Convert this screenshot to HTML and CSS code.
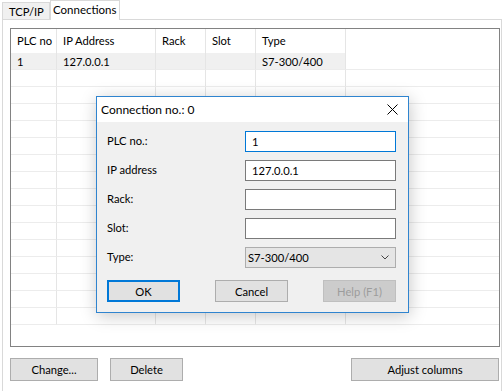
FILE: index.html
```html
<!DOCTYPE html>
<html>
<head>
<meta charset="utf-8">
<link rel="stylesheet" href="styles.css">
</head>
<body>
<div class="window">
  <div class="tabs">
    <div class="tab">TCP/IP</div>
    <div class="tab active">Connections</div>
  </div>
  <div class="panel">
    <div class="list">
      <div class="grid">
        <div class="hc">PLC no</div><div class="hc">IP Address</div><div class="hc">Rack</div><div class="hc">Slot</div><div class="hc">Type</div><div class="hc last"></div>
        <div class="c sel">1</div><div class="c sel">127.0.0.1</div><div class="c sel"></div><div class="c sel"></div><div class="c sel">S7-300/400</div><div class="c last"></div>
      </div>
      <div class="grid empty" id="empty"></div>
    </div>
    <div class="actions">
      <button class="btn change">Change...</button>
      <button class="btn delete">Delete</button>
      <button class="btn adjust">Adjust columns</button>
    </div>
  </div>

  <div class="dialog">
    <div class="titlebar">
      <span class="title">Connection no.: 0</span>
      <svg class="close" width="11" height="11" viewBox="0 0 11 11"><path d="M0.5 0.5 L10.5 10.5 M10.5 0.5 L0.5 10.5" stroke="#000" stroke-width="1" fill="none"/></svg>
    </div>
    <div class="dbody">
      <div class="form">
        <label>PLC no.:</label><div class="field focus">1</div>
        <label>IP address</label><div class="field">127.0.0.1</div>
        <label>Rack:</label><div class="field"></div>
        <label>Slot:</label><div class="field"></div>
        <label>Type:</label>
        <div class="select"><span>S7-300/400</span>
          <svg width="8" height="5" viewBox="0 0 8 5"><path d="M0.5 0.5 L4 4 L7.5 0.5" stroke="#444" stroke-width="1" fill="none"/></svg>
        </div>
      </div>
      <div class="dbuttons">
        <button class="btn dbtn ok">OK</button>
        <button class="btn dbtn">Cancel</button>
        <button class="btn dbtn disabled">Help (F1)</button>
      </div>
    </div>
  </div>
</div>
<script>
  var e = document.getElementById('empty');
  var h = '';
  for (var r = 0; r < 15; r++) {
    for (var c = 0; c < 5; c++) h += '<div class="c"></div>';
    h += '<div class="c last"></div>';
  }
  e.innerHTML = h;
</script>
</body>
</html>
```
FILE: styles.css
```css
* { box-sizing: border-box; }
html, body { margin: 0; padding: 0; background: #fff; }
body {
  font-family: "Segoe UI", Lato, "Noto Sans", sans-serif;
  font-size: 11.2px;
  color: #000;
  width: 503px;
  height: 391px;
  overflow: hidden;
}
.window { position: relative; width: 503px; height: 391px; }

.tabs {
  display: flex;
  align-items: flex-end;
  height: 19px;
  padding-left: 2px;
}
.tab {
  height: 17px;
  width: 48px;
  border: 1px solid #d9d9d9;
  border-bottom: none;
  background: #f0f0f0;
  padding-left: 6px;
  line-height: 17px;
}
.tab.active {
  height: 20px;
  width: 70px;
  background: #fff;
  margin-bottom: -1px;
  border-left: 1px solid #d9d9d9;
  position: relative;
  z-index: 1;
  padding-left: 2px;
  line-height: 17px;
  font-size: 11.5px;
}
.panel {
  margin-left: 2px;
  width: 500px;
  height: 380px;
  border: 1px solid #d9d9d9;
  border-bottom: none;
  padding: 8px 1px 0 7px;
  background: #fff;
}
.list {
  width: 490px;
  height: 319px;
  border: 1px solid #828282;
  background: #fff;
}
.grid {
  display: grid;
  grid-template-columns: 46px 99px 50px 50px 90px 1fr;
}
.hc {
  height: 24px;
  line-height: 24px;
  padding-left: 6px;
  border-right: 1px solid #e5e5e5;
  white-space: nowrap;
}
.c {
  height: 17px;
  line-height: 17px;
  padding-left: 6px;
  border-right: 1px solid #e5e5e5;
  border-bottom: 1px solid #ececec;
  white-space: nowrap;
}
.c.sel { background: #f0f0f0; }
.hc.last, .c.last { border-right: none; }

.actions {
  display: flex;
  margin-top: 11px;
  gap: 12px;
}
.btn {
  font-family: inherit;
  font-size: 11.2px;
  color: #000;
  background: #e1e1e1;
  border: 1px solid #adadad;
  height: 23px;
  padding: 0;
  margin: 0;
}
.change { width: 88px; }
.delete { width: 73px; }
.adjust { width: 148px; margin-left: auto; margin-right: 1px; }

.dialog {
  position: absolute;
  left: 96px;
  top: 96px;
  width: 313px;
  height: 217px;
  border: 1px solid #2f84cf;
  background: #f0f0f0;
  box-shadow: 1px 3px 16px rgba(0,0,0,0.22);
  z-index: 5;
}
.titlebar {
  height: 25px;
  background: #fff;
  display: flex;
  align-items: center;
  justify-content: space-between;
  padding-left: 4px;
  padding-right: 10px;
}
.title { line-height: 25px; font-size: 12px; }
.dbody {
  padding: 9px 12px 10px 10px;
}
.form {
  display: grid;
  grid-template-columns: 138px 151px;
  row-gap: 8px;
}
.form label {
  height: 21px;
  line-height: 20px;
}
.field {
  height: 21px;
  border: 1px solid #7a7a7a;
  background: #fff;
  padding-left: 6px;
  line-height: 19px;
}
.field.focus { border-color: #0078d7; }
.select {
  height: 21px;
  border: 1px solid #adadad;
  background: #e5e5e5;
  padding-left: 2px;
  padding-right: 6px;
  display: flex;
  align-items: center;
  justify-content: space-between;
}
.dbuttons {
  display: flex;
  justify-content: space-between;
  margin-top: 12px;
  width: 289px;
}
.dbtn { width: 73px; height: 22px; }
.ok { border: 2px solid #0078d7; }
.disabled {
  background: #cccccc;
  border-color: #bfbfbf;
  color: #9c9c9c;
}
```
